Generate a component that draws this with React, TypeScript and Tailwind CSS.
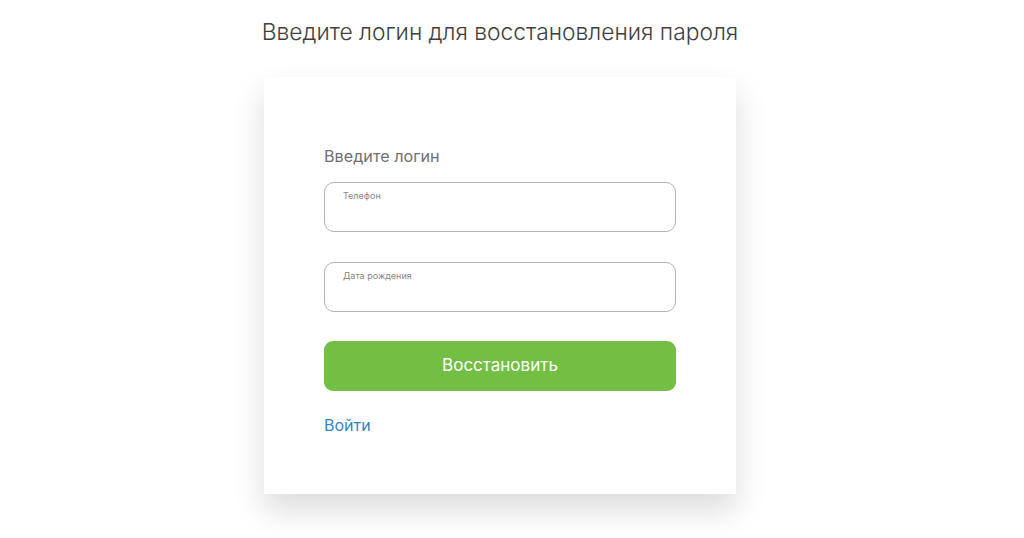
import React from 'react';

const Field = ({ label }: { label: string }) => (
  <label className="relative block h-[50px] rounded-[10px] border border-[#b3b3b3] bg-white">
    <span className="absolute left-[18px] top-[7px] text-[9px] leading-[12px] text-[#8a8282]">{label}</span>
    <input className="h-full w-full rounded-[10px] bg-transparent px-[18px] pt-[16px] text-[14px] text-[#333] outline-none" />
  </label>
);

const App: React.FC = () => {
  return (
    <div className="min-h-[538px] bg-white pr-[24px] font-['Inter',sans-serif]">
      <div className="flex flex-col items-center pt-[17px]">
        <h1 className="text-[22.8px] font-light leading-[30px] text-[#3f3f3f]">
          Введите логин для восстановления пароля
        </h1>
        <div className="mt-[30px] w-[472px] bg-white px-[60px] pb-[57px] pt-[67px] shadow-[0_16px_30px_rgba(0,0,0,0.14)]">
          <div className="text-[16.2px] leading-[24px] text-[#707070]">Введите логин</div>
          <div className="mt-[14px] flex flex-col gap-[30px]">
            <Field label="Телефон" />
            <Field label="Дата рождения" />
            <button className="-mt-[1px] h-[50px] rounded-[9px] bg-[#72bf44] text-[17px] text-white">
              Восстановить
            </button>
          </div>
          <a href="#" className="mt-[22px] block text-[16px] leading-[24px] text-[#2f86c9]">
            Войти
          </a>
        </div>
      </div>
    </div>
  );
};

export default App;
